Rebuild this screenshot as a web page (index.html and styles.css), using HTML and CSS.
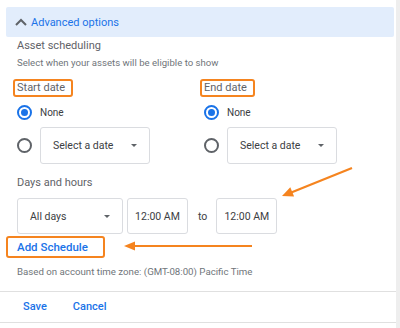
FILE: index.html
```html
<!DOCTYPE html>
<html>
	<head>
		<meta charset="utf-8">
		<title>Advanced options</title>
		<link rel="stylesheet" href="styles.css">
	</head>
	<body>
		<div class="page">
			<div class="panel">
				<div class="panel-head">
					<svg class="chevron" width="12" height="8" viewBox="0 0 12 8">
						<path d="M1 7 L6 2 L11 7" fill="none" stroke="#5f6368" stroke-width="2"/>
					</svg>
					<span>Advanced options</span>
				</div>

				<div class="content">
					<div class="section-title">Asset scheduling</div>
					<div class="hint">Select when your assets will be eligible to show</div>

					<div class="dates">
						<div class="date-col">
							<span class="mark">Start date</span>
							<div class="radio-row">
								<span class="radio checked"></span>
								<span>None</span>
							</div>
							<div class="radio-row">
								<span class="radio"></span>
								<div class="select date-select">Select a date<span class="caret"></span></div>
							</div>
						</div>
						<div class="date-col">
							<span class="mark">End date</span>
							<div class="radio-row">
								<span class="radio checked"></span>
								<span>None</span>
							</div>
							<div class="radio-row">
								<span class="radio"></span>
								<div class="select date-select">Select a date<span class="caret"></span></div>
							</div>
						</div>
					</div>

					<div class="section-title days">Days and hours</div>
					<div class="hours">
						<div class="select days-select">All days<span class="caret"></span></div>
						<div class="field">12:00 AM</div>
						<span class="to">to</span>
						<div class="field">12:00 AM</div>
					</div>

					<span class="mark add">Add Schedule</span>
					<div class="hint tz">Based on account time zone: (GMT-08:00) Pacific Time</div>
				</div>

				<div class="actions">
					<a>Save</a>
					<a>Cancel</a>
				</div>
			</div>
			<div class="scroll"></div>

			<!-- annotation arrows drawn over the form -->
			<svg class="notes" width="400" height="328" viewBox="0 0 400 328">
				<line x1="352" y1="168" x2="290" y2="193" stroke="#f5841f" stroke-width="2.2"/>
				<polygon points="282,196 294.1,196.5 290.3,187.3" fill="#f5841f"/>
				<line x1="252" y1="246" x2="132" y2="246" stroke="#f5841f" stroke-width="2.2"/>
				<polygon points="124,246 135,241.5 135,250.5" fill="#f5841f"/>
			</svg>
		</div>
	</body>
</html>
```

FILE: styles.css
```css
:root {
	--blue: #1a73e8;
	--orange: #f5841f;
	--grey: #5f6368;
	--text: #3c4043;
	--line: #e0e0e0;
	--field: #dadce0;
}

body {
	margin: 0;
	background: #fff;
	font-family: Roboto, "Liberation Sans", sans-serif;
	color: var(--grey);
}

.page {
	display: flex;
	height: 328px;
	position: relative;
}

.panel {
	width: 396px;
	height: 323px;
	box-sizing: border-box;
	border-bottom: 1px solid var(--line);
}

.scroll {
	width: 4px;
	background: #eeeeee;
}

.panel-head {
	display: flex;
	align-items: center;
	gap: 4px;
	height: 30px;
	margin: 7px 2px 0 6px;
	padding-left: 9px;
	background: #e2edfc;
	border-radius: 2px;
	color: var(--blue);
	font-size: 11px;
}

.content {
	display: flex;
	flex-direction: column;
	align-items: flex-start;
	padding-left: 17px;
}

.section-title {
	margin-top: 2px;
	font-size: 11px;
	line-height: 14px;
}

.hint {
	margin-top: 3px;
	font-size: 9.6px;
	line-height: 13px;
	color: #70757a;
}

.dates {
	align-self: stretch;
	display: grid;
	grid-template-columns: 187px 1fr;
	margin-top: 10px;
}

.date-col {
	display: flex;
	flex-direction: column;
	align-items: flex-start;
}

.mark {
	margin-left: -4px;
	padding: 0 6px 0 2px;
	border: 2px solid var(--orange);
	border-radius: 3px;
	font-size: 11px;
	line-height: 14px;
}

.radio-row {
	display: flex;
	align-items: center;
	gap: 8px;
	height: 17px;
	margin-top: 7px;
	font-size: 10px;
	color: var(--text);
}

.radio-row + .radio-row {
	height: auto;
	margin-top: 6px;
}

.radio {
	width: 15px;
	height: 15px;
	box-sizing: border-box;
	border: 2px solid var(--grey);
	border-radius: 50%;
}

.radio.checked {
	display: flex;
	align-items: center;
	justify-content: center;
	border-color: var(--blue);
}

.radio.checked::after {
	content: "";
	width: 7px;
	height: 7px;
	border-radius: 50%;
	background: var(--blue);
}

.select {
	display: flex;
	align-items: center;
	justify-content: space-between;
	box-sizing: border-box;
	height: 37px;
	padding: 0 12px;
	border: 1px solid var(--field);
	border-radius: 3px;
	font-size: 10.5px;
	color: var(--text);
}

.date-select {
	width: 110px;
}

.caret {
	width: 0;
	height: 0;
	border-left: 3.5px solid transparent;
	border-right: 3.5px solid transparent;
	border-top: 3.5px solid var(--grey);
}

.days {
	margin-top: 12px;
}

.hours {
	display: flex;
	align-items: center;
	margin-top: 8px;
}

.days-select {
	width: 106px;
	height: 36px;
}

.field {
	display: flex;
	align-items: center;
	justify-content: center;
	box-sizing: border-box;
	width: 61px;
	height: 36px;
	margin-left: 4px;
	border: 1px solid var(--field);
	border-radius: 3px;
	font-size: 10.5px;
	color: var(--text);
}

.to {
	margin: 0 5px 0 10px;
	font-size: 10.5px;
	color: var(--text);
}

.add {
	margin-top: 2px;
	margin-left: -11px;
	padding: 2px 15px 2px 9px;
	color: var(--blue);
	font-size: 11.5px;
	font-weight: 500;
}

.tz {
	margin-top: 8px;
	font-size: 9.7px;
	line-height: 12px;
}

.actions {
	display: flex;
	align-items: center;
	gap: 26px;
	height: 29px;
	margin-top: 13px;
	padding-left: 23px;
	border-top: 1px solid var(--line);
	color: var(--blue);
	font-size: 11px;
	font-weight: 500;
}

.notes {
	position: absolute;
	top: 0;
	left: 0;
	pointer-events: none;
}
```
